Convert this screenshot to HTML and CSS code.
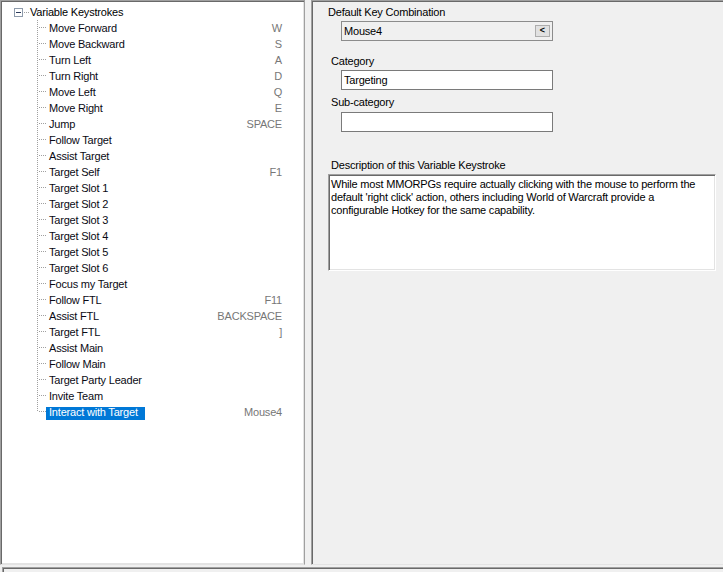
FILE: index.html
```html
<!DOCTYPE html>
<html>
<head>
<meta charset="utf-8">
<link rel="stylesheet" href="styles.css">
</head>
<body>
<div class="window">
  <div class="main">
    <div class="tree-panel">
      <div class="root"><span class="expander"></span><span class="root-dots"></span><span class="root-label">Variable Keystrokes</span></div>
      <div class="children">
        <div class="node"><span class="name">Move Forward</span><span class="key">W</span></div>
        <div class="node"><span class="name">Move Backward</span><span class="key">S</span></div>
        <div class="node"><span class="name">Turn Left</span><span class="key">A</span></div>
        <div class="node"><span class="name">Turn Right</span><span class="key">D</span></div>
        <div class="node"><span class="name">Move Left</span><span class="key">Q</span></div>
        <div class="node"><span class="name">Move Right</span><span class="key">E</span></div>
        <div class="node"><span class="name">Jump</span><span class="key">SPACE</span></div>
        <div class="node"><span class="name">Follow Target</span></div>
        <div class="node"><span class="name">Assist Target</span></div>
        <div class="node"><span class="name">Target Self</span><span class="key">F1</span></div>
        <div class="node"><span class="name">Target Slot 1</span></div>
        <div class="node"><span class="name">Target Slot 2</span></div>
        <div class="node"><span class="name">Target Slot 3</span></div>
        <div class="node"><span class="name">Target Slot 4</span></div>
        <div class="node"><span class="name">Target Slot 5</span></div>
        <div class="node"><span class="name">Target Slot 6</span></div>
        <div class="node"><span class="name">Focus my Target</span></div>
        <div class="node"><span class="name">Follow FTL</span><span class="key">F11</span></div>
        <div class="node"><span class="name">Assist FTL</span><span class="key">BACKSPACE</span></div>
        <div class="node"><span class="name">Target FTL</span><span class="key">]</span></div>
        <div class="node"><span class="name">Assist Main</span></div>
        <div class="node"><span class="name">Follow Main</span></div>
        <div class="node"><span class="name">Target Party Leader</span></div>
        <div class="node"><span class="name">Invite Team</span></div>
        <div class="node selected"><span class="name">Interact with Target</span><span class="key">Mouse4</span></div>
      </div>
    </div>
    <div class="detail-panel">
      <div class="label lbl-key">Default Key Combination</div>
      <div class="keybox"><span class="keytext">Mouse4</span><span class="keybtn">&lt;</span></div>
      <div class="label lbl-cat">Category</div>
      <div class="textbox">Targeting</div>
      <div class="label lbl-sub">Sub-category</div>
      <div class="textbox tb-sub"></div>
      <div class="label lbl-desc">Description of this Variable Keystroke</div>
      <div class="desc">While most MMORPGs require actually clicking with the mouse to perform the<br>default 'right click' action, others including World of Warcraft provide a<br>configurable Hotkey for the same capability.</div>
    </div>
  </div>
  <div class="status"></div>
</div>
</body>
</html>
```

FILE: styles.css
```css
html, body {
  margin: 0;
  padding: 0;
}
body {
  background: #f0f0f0;
  font-family: "Liberation Sans", Arial, sans-serif;
  font-size: 11px;
  letter-spacing: -0.2px;
  color: #000;
  width: 723px;
  height: 572px;
  overflow: hidden;
}
.window {
  display: flex;
  flex-direction: column;
  height: 572px;
}
.main {
  display: flex;
  gap: 6px;
  height: 565px;
}
.tree-panel {
  width: 305px;
  box-sizing: border-box;
  background: #fff;
  border: 1px solid;
  border-color: #a0a0a0 #a0a0a0 #e3e3e3 #a0a0a0;
  box-shadow: inset 1px 1px #696969, inset -1px -1px #e3e3e3;
  padding: 3px 1px 0 1px;
}
.root {
  display: flex;
  align-items: center;
  height: 16px;
  line-height: 16px;
}
.expander {
  width: 9px;
  height: 9px;
  box-sizing: border-box;
  border: 1px solid #8e9bab;
  margin-left: 12px;
  display: flex;
  align-items: center;
  justify-content: center;
  background: #fff;
}
.expander::before {
  content: "";
  width: 5px;
  height: 1px;
  background: #2b3b5c;
}
.root-dots {
  width: 7px;
  height: 1px;
  background: repeating-linear-gradient(to right, #a0a0a0 0 1px, transparent 1px 2px) 1px 0 / 5px 1px no-repeat;
}
.children {
  background: repeating-linear-gradient(to bottom, #a0a0a0 0 1px, transparent 1px 2px) 35px 0 / 1px calc(100% - 8px) no-repeat;
}
.node {
  display: flex;
  height: 16px;
  line-height: 16px;
  padding-right: 21px;
  background: repeating-linear-gradient(to right, #a0a0a0 0 1px, transparent 1px 2px) 37px 7px / 8px 1px no-repeat;
}
.name {
  margin-left: 44px;
  padding: 0 5px 0 3px;
  color: #0a0a14;
}
.node.selected .name {
  background: linear-gradient(transparent 3px, #0078d7 3px);
  color: #fff;
  padding-right: 7px;
}
.key {
  margin-left: auto;
  color: #777;
}
.detail-panel {
  flex: 1;
  display: flex;
  flex-direction: column;
  align-items: flex-start;
  border-top: 1px solid #a0a0a0;
  border-left: 1px solid #a0a0a0;
  border-bottom: 1px solid #e3e3e3;
  box-shadow: inset 1px 1px #696969;
  padding: 1px 0 0 1px;
}
.label {
  height: 16px;
  line-height: 16px;
  white-space: nowrap;
}
.lbl-key { margin: 2px 0 0 15px; }
.lbl-cat { margin: 12px 0 0 18px; }
.lbl-sub { margin: 4px 0 0 18px; }
.lbl-desc { margin: 25px 0 0 18px; }
.keybox {
  margin: 1px 0 0 28px;
  width: 212px;
  height: 20px;
  box-sizing: border-box;
  border: 1px solid #8c8c8c;
  background: #f0f0f0;
  display: flex;
  align-items: center;
  padding-left: 2px;
  line-height: 18px;
}
.keybtn {
  margin-left: auto;
  margin-right: 2px;
  width: 15px;
  height: 12px;
  box-sizing: border-box;
  background: #e1e1e1;
  border: 1px solid #adadad;
  font-size: 9px;
  font-weight: bold;
  line-height: 9px;
  text-align: center;
  letter-spacing: 0;
}
.textbox {
  margin: 1px 0 0 28px;
  width: 212px;
  height: 20px;
  box-sizing: border-box;
  border: 1px solid #7a7a7a;
  background: #fff;
  padding-left: 2px;
  line-height: 18px;
}
.tb-sub { margin-top: 2px; }
.desc {
  margin: 1px 0 0 15px;
  width: 388px;
  height: 97px;
  box-sizing: border-box;
  background: #fff;
  border: 1px solid;
  border-color: #a0a0a0 #fff #fff #a0a0a0;
  box-shadow: inset 1px 1px #696969, inset -1px -1px #e3e3e3;
  padding: 3px 3px 0 2px;
  line-height: 13px;
  white-space: nowrap;
}
.status {
  flex: 1;
  margin: 2px 0 0 2px;
  border-top: 1px solid #a0a0a0;
  border-left: 1px solid #a0a0a0;
  box-shadow: inset 1px 1px #696969;
}
```
